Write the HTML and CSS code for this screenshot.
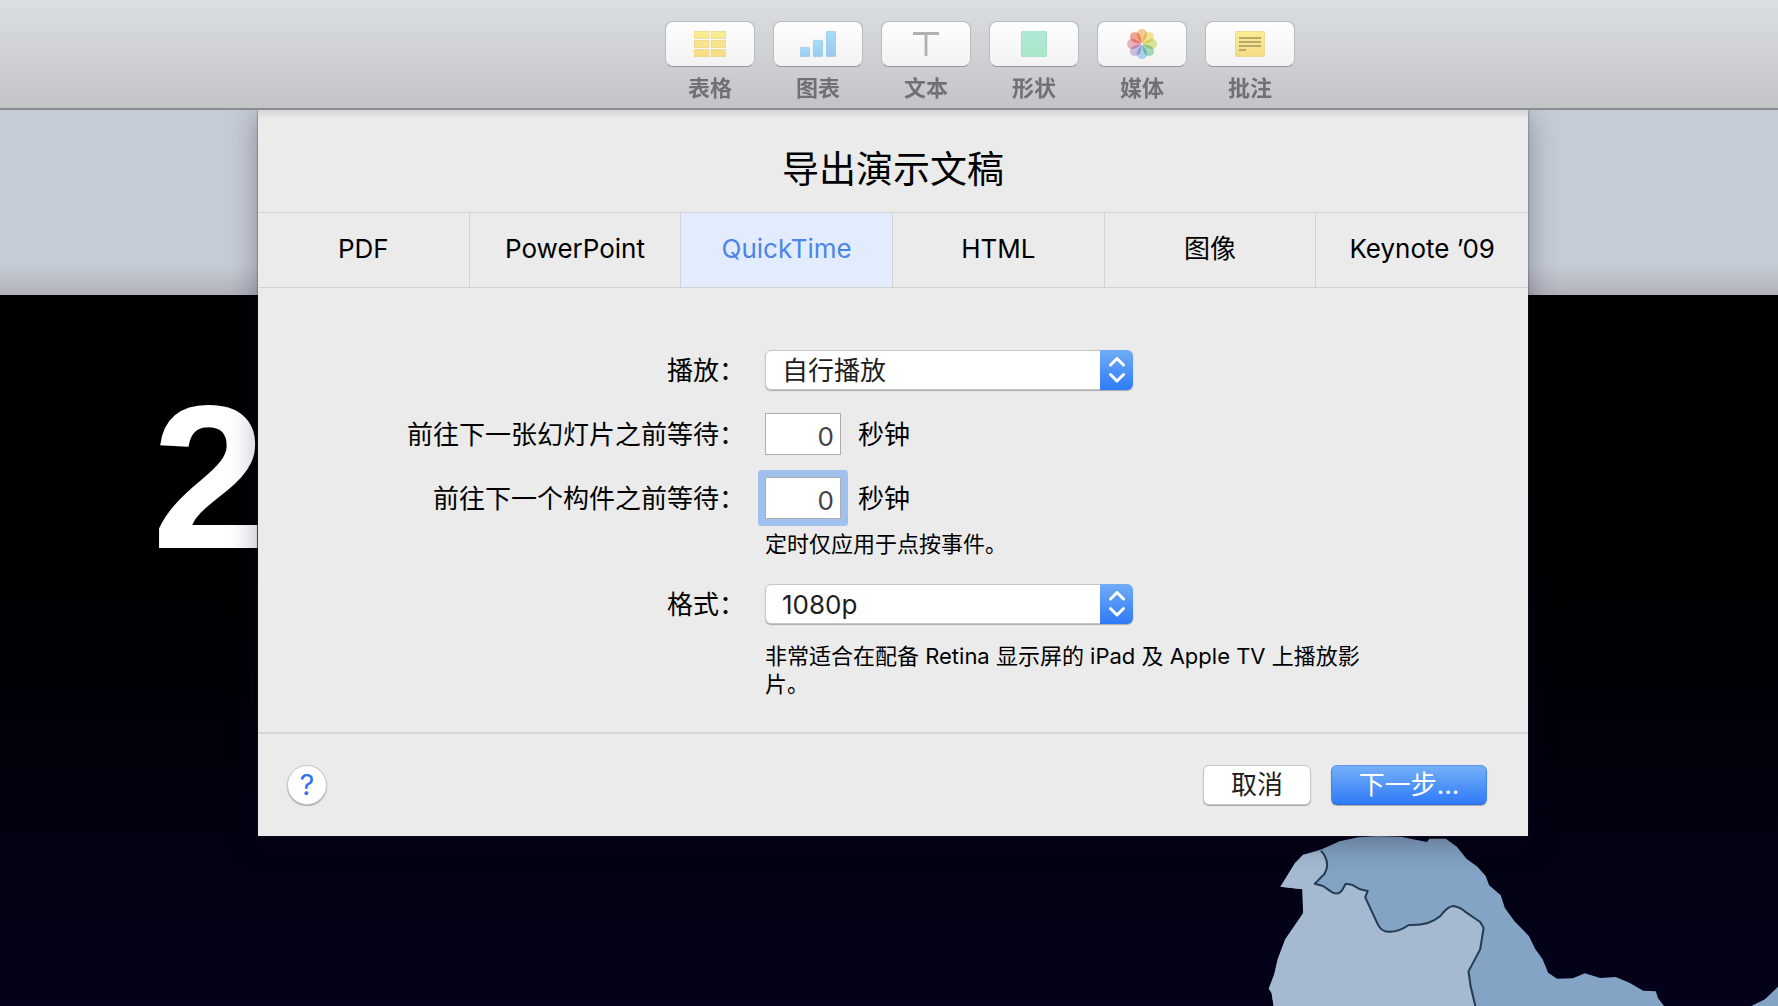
FILE: index.html
```html
<!DOCTYPE html>
<html lang="zh-CN">
<head>
<meta charset="utf-8">
<meta name="viewport" content="width=device-width, initial-scale=1">
<title>导出演示文稿</title>
<link rel="stylesheet" href="styles.css">
</head>
<body>
<header class="toolbar">
  <button class="tool" type="button">
    <span class="tool-face">
      <svg width="32" height="26" viewBox="0 0 32 26" aria-hidden="true">
        <defs><linearGradient id="yellow" x1="0" y1="0" x2="0" y2="26" gradientUnits="userSpaceOnUse"><stop offset="0" stop-color="#f9ee94"/><stop offset="1" stop-color="#f5da84"/></linearGradient></defs>
        <g fill="url(#yellow)" stroke="#ead27c" stroke-width=".6">
          <rect x=".3" y=".3" width="14.6" height="7.2"/><rect x="17.1" y=".3" width="14.6" height="7.2"/>
          <rect x=".3" y="9.3" width="14.6" height="7.2"/><rect x="17.1" y="9.3" width="14.6" height="7.2"/>
          <rect x=".3" y="18.5" width="14.6" height="7.2"/><rect x="17.1" y="18.5" width="14.6" height="7.2"/>
        </g>
      </svg>
    </span>
    <span class="tool-name">表格</span>
  </button>
  <button class="tool" type="button">
    <span class="tool-face">
      <svg width="36" height="26" viewBox="0 0 36 26" aria-hidden="true">
        <defs><linearGradient id="blue" x1="0" y1="0" x2="0" y2="1"><stop offset="0" stop-color="#a5def7"/><stop offset="1" stop-color="#9bc8ee"/></linearGradient></defs>
        <g fill="url(#blue)" stroke="#8fc3e6" stroke-width=".7">
          <rect x=".4" y="16.4" width="9.2" height="9.2" rx=".8"/><rect x="13.4" y="9.4" width="9.2" height="16.2" rx=".8"/><rect x="26.4" y=".4" width="9.2" height="25.2" rx=".8"/>
        </g>
      </svg>
    </span>
    <span class="tool-name">图表</span>
  </button>
  <button class="tool" type="button">
    <span class="tool-face">
      <svg width="26" height="26" viewBox="0 0 26 26" aria-hidden="true"><path d="M.5 4V2.5h25V4M13 2.500V25" fill="none" stroke="#b0b0b1" stroke-width="2.800"/></svg>
    </span>
    <span class="tool-name">文本</span>
  </button>
  <button class="tool" type="button">
    <span class="tool-face">
      <svg width="26" height="26" viewBox="0 0 26 26" aria-hidden="true">
        <defs><linearGradient id="green" x1="0" y1="0" x2="0" y2="1"><stop offset="0" stop-color="#b1e8da"/><stop offset="1" stop-color="#a9e6c5"/></linearGradient></defs>
        <rect x=".4" y=".4" width="25.200" height="25.200" rx=".8" fill="url(#green)" stroke="#98d9bd" stroke-width=".7"/>
      </svg>
    </span>
    <span class="tool-name">形状</span>
  </button>
  <button class="tool" type="button">
    <span class="tool-face">
      <svg width="32" height="32" viewBox="-16 -16 32 32" aria-hidden="true">
        <g class="petals" stroke-opacity=".3" stroke-width=".6">
          <path fill="#f9cd94" stroke="#e7a94f" d="M-4.800-10a4.800 4.800 0 0 1 9.600 0C4.800-6 2-3 0-1-2-3-4.800-6-4.800-10Z"/>
          <path fill="#f7e998" stroke="#dcc95a" transform="rotate(45)" d="M-4.800-10a4.800 4.800 0 0 1 9.600 0C4.800-6 2-3 0-1-2-3-4.800-6-4.800-10Z"/>
          <path fill="#e0eaa0" stroke="#bccb60" transform="rotate(90)" d="M-4.800-10a4.800 4.800 0 0 1 9.600 0C4.800-6 2-3 0-1-2-3-4.800-6-4.800-10Z"/>
          <path fill="#a9e0c0" stroke="#5fb98a" transform="rotate(135)" d="M-4.800-10a4.800 4.800 0 0 1 9.600 0C4.800-6 2-3 0-1-2-3-4.800-6-4.800-10Z"/>
          <path fill="#b3d8f5" stroke="#76aee0" transform="rotate(180)" d="M-4.800-10a4.800 4.800 0 0 1 9.600 0C4.800-6 2-3 0-1-2-3-4.800-6-4.800-10Z"/>
          <path fill="#d2c2ea" stroke="#a88ccb" transform="rotate(225)" d="M-4.800-10a4.800 4.800 0 0 1 9.600 0C4.800-6 2-3 0-1-2-3-4.800-6-4.800-10Z"/>
          <path fill="#f1b6c6" stroke="#d98399" transform="rotate(270)" d="M-4.800-10a4.800 4.800 0 0 1 9.600 0C4.800-6 2-3 0-1-2-3-4.800-6-4.800-10Z"/>
          <path fill="#f6a794" stroke="#df7863" transform="rotate(315)" d="M-4.800-10a4.800 4.800 0 0 1 9.600 0C4.800-6 2-3 0-1-2-3-4.800-6-4.800-10Z"/>
        </g>
      </svg>
    </span>
    <span class="tool-name">媒体</span>
  </button>
  <button class="tool" type="button">
    <span class="tool-face">
      <svg width="30" height="26" viewBox="0 0 30 26" aria-hidden="true">
        <rect x=".4" y=".4" width="29.200" height="25.200" rx=".8" fill="url(#yellow)" stroke="#e6cf80" stroke-width=".7"/>
        <path d="M4 7h22M4 11h22M4 15h22M4 19h7" stroke="#b9a96c" stroke-width="1.800"/>
      </svg>
    </span>
    <span class="tool-name">批注</span>
  </button>
</header>

<main class="workspace">
  <div class="canvas">
    <section class="slide">
      <span class="slide-number">2</span>
      <svg class="map" viewBox="0 0 1568 540" preserveAspectRatio="none" aria-hidden="true">
        <path fill="#83a4c4" d="M98 540 92 500 84 488 100 445 110 400 132 340 184 262 182 190 118 182 160 112 184 86 238 70 290 46 345 34 400 30 470 32 515 42 545 48 552 38 600 38 632 62 660 98 692 122 716 150 726 178 760 208 772 246 800 286 842 330 860 368 882 400 898 440 924 458 970 457 1005 442 1050 456 1095 453 1135 470 1175 494 1212 496 1218 516 1236 540ZM1490 540 1530 520 1568 482V540Z"/>
        <path fill="#a5bad1" d="M98 540 92 500 84 488 100 445 110 400 132 340 184 262 182 190 118 182 160 112 184 86 236 76Q266 110 246 144L218 173 242 180 270 200Q288 208 298 192L308 173 326 176 350 190 372 195 365 214 402 296Q412 316 430 317 460 320 492 297 550 300 584 270 606 240 622 240 640 242 660 260L700 288 710 306 700 370 666 436 672 480 686 540Z"/>
        <path fill="none" stroke="#243d54" stroke-width="6" stroke-linejoin="round" d="M236 74Q266 110 246 144L218 173 242 180 270 200Q288 208 298 192L308 173 326 176 350 190 372 195 365 214 402 296Q412 316 430 317 460 320 492 297 550 300 584 270 606 240 622 240 640 242 660 260L700 288 710 306 700 370 666 436 672 480 686 540"/>
      </svg>
    </section>
  </div>

  <form class="sheet">
    <h1 class="sheet-title">导出演示文稿</h1>
    <nav class="tabs" aria-label="导出格式">
      <button class="tab" type="button">PDF</button>
      <button class="tab" type="button">PowerPoint</button>
      <button class="tab tab-current" type="button" aria-current="true">QuickTime</button>
      <button class="tab" type="button">HTML</button>
      <button class="tab" type="button">图像</button>
      <button class="tab" type="button">Keynote ’09</button>
    </nav>

    <div class="fields">
      <label class="field-label" for="playback">播放：</label>
      <div class="popup">
        <select class="popup-select" id="playback"><option>自行播放</option></select>
        <span class="popup-cap"><svg width="16" height="26" viewBox="0 0 16 26" aria-hidden="true"><path d="M1.500 8 8 1.500 14.500 8M1.500 17.500 8 24l6.500-6.500"/></svg></span>
      </div>

      <label class="field-label" for="slide-wait">前往下一张幻灯片之前等待：</label>
      <div class="seconds"><input class="number" id="slide-wait" type="text" inputmode="numeric" value="0"><span class="unit">秒钟</span></div>

      <label class="field-label" for="build-wait">前往下一个构件之前等待：</label>
      <div class="seconds"><input class="number number-active" id="build-wait" type="text" inputmode="numeric" value="0"><span class="unit">秒钟</span></div>
      <p class="hint hint-timing">定时仅应用于点按事件。</p>

      <label class="field-label" for="format">格式：</label>
      <div class="popup">
        <select class="popup-select" id="format"><option>1080p</option></select>
        <span class="popup-cap"><svg width="16" height="26" viewBox="0 0 16 26" aria-hidden="true"><path d="M1.500 8 8 1.500 14.500 8M1.500 17.500 8 24l6.500-6.500"/></svg></span>
      </div>
      <p class="hint">非常适合在配备 Retina 显示屏的 iPad 及 Apple TV 上播放影片。</p>
    </div>

    <footer class="actions">
      <button class="help" type="button" aria-label="帮助">?</button>
      <button class="button" type="button">取消</button>
      <button class="button button-primary" type="submit">下一步...</button>
    </footer>
  </form>
</main>
</body>
</html>
```
FILE: styles.css
```css
* {
  box-sizing: border-box;
}

body {
  margin: 0;
  min-height: 100vh;
  display: flex;
  flex-direction: column;
  font-family: Inter, "Noto Sans CJK SC", sans-serif;
  font-size: 26px;
  line-height: 40px;
  color: #000;
  background: #020009;
}

button,
input,
select {
  font: inherit;
  color: inherit;
  margin: 0;
}

/* Toolbar */

.toolbar {
  display: flex;
  justify-content: center;
  gap: 18px;
  padding: 21px 0 5px 182px;
  border-bottom: 2px solid #8b8c90;
  background: linear-gradient(#dbdfe2, #c3c4c7);
}

.tool {
  display: flex;
  flex-direction: column;
  gap: 7px;
  width: 90px;
  padding: 0;
  border: 0;
  background: none;
}

.tool-face {
  display: flex;
  align-items: center;
  justify-content: center;
  height: 46px;
  border: 1px solid #b9babd;
  border-bottom-color: #98999c;
  border-radius: 8px;
  background: linear-gradient(#fefefe, #f2f2f2);
}

.petals path {
  mix-blend-mode: multiply;
}

.tool-name {
  font-size: 22px;
  font-weight: 600;
  line-height: 29px;
  color: #707175;
}

/* Workspace: the sheet is stacked over the canvas */

.workspace {
  flex: 1;
  display: grid;
  grid-template-columns: 100%;
  overflow: hidden;
}

.canvas,
.sheet {
  grid-area: 1 / 1;
}

.canvas {
  display: flex;
  flex-direction: column;
  padding-top: 185px;
  background: linear-gradient(#c6ccd5 155px, #b0b2bb 185px);
}

.slide {
  position: relative;
  flex: 1;
  padding: 92px 0 0 152px;
  background: linear-gradient(#000, #000002 40%, #04021a);
}

.slide-number {
  font-family: "Liberation Sans", sans-serif;
  font-size: 204px;
  font-weight: 700;
  line-height: 180px;
  color: #fff;
}

.map {
  position: absolute;
  right: 0;
  bottom: 0;
  width: 538px;
  height: 180px;
}

/* Sheet */

.sheet {
  z-index: 1;
  align-self: start;
  margin: 0 250px 0 258px;
  background: linear-gradient(#d4d4d5, #ebebeb 8px);
  box-shadow: 0 0 2px rgba(40, 40, 50, 0.7), 0 6px 28px rgba(20, 10, 40, 0.35);
}

.sheet-title {
  margin: 0;
  padding: 36px 0 18px;
  font-size: 37px;
  font-weight: 400;
  line-height: 48px;
  text-align: center;
}

.tabs {
  display: grid;
  grid-template-columns: repeat(6, 1fr);
  border-top: 1px solid #d2d2d4;
  border-bottom: 1px solid #d2d2d4;
}

.tab {
  height: 74px;
  padding: 0 0 2px;
  border: 0;
  border-right: 1px solid #d2d2d4;
  background: none;
}

.tab:last-child {
  border-right: 0;
}

.tab-current {
  color: #4a86e8;
  background: #e2ecfe;
}

.fields {
  display: grid;
  grid-template-columns: 487px minmax(0, 620px);
  column-gap: 20px;
  align-items: center;
  padding: 62px 0 34px;
}

.field-label {
  padding-top: 2px;
  line-height: 38px;
  text-align: right;
}

.popup {
  position: relative;
  display: flex;
  width: 368px;
  height: 40px;
  border: 1px solid #c6c6c6;
  border-radius: 6px;
  background: #fff;
  box-shadow: 0 1px 1px #aaa;
}

.popup-select {
  flex: 1;
  padding: 0 16px;
  border: 0;
  appearance: none;
  background: none;
  color: #1e1e1e;
  outline: none;
}

.popup-cap {
  position: absolute;
  top: -1px;
  right: -1px;
  display: flex;
  align-items: center;
  justify-content: center;
  width: 33px;
  height: 40px;
  border-radius: 0 6px 6px 0;
  background: linear-gradient(#70adf5, #2f7af8);
  pointer-events: none;
}

.popup-cap path {
  fill: none;
  stroke: #fff;
  stroke-width: 3;
  stroke-linecap: round;
  stroke-linejoin: round;
}

.seconds {
  display: flex;
  align-items: center;
  gap: 17px;
  height: 42px;
}

.seconds,
.field-label[for$="wait"] {
  margin-top: 22px;
}

.popup + .field-label,
.popup + .field-label + .seconds {
  margin-top: 23px;
}

.unit {
  padding-top: 2px;
  line-height: 38px;
}

.number {
  width: 76px;
  height: 42px;
  padding: 4px 6px 0;
  border: 1px solid #adadad;
  border-radius: 0;
  background: #fff;
  color: #444;
  text-align: right;
  outline: none;
}

.number-active {
  border-radius: 1px;
  box-shadow: 0 0 0 7px #a0c0ee;
}

.hint {
  grid-column: 2;
  margin: 18px 0 0;
  font-size: 22px;
  line-height: 28px;
}

.hint-timing {
  margin: 11px 0 26px;
}

.actions {
  display: flex;
  align-items: center;
  gap: 20px;
  padding: 31px 41px 31px 29px;
  border-top: 2px solid #d6d6d6;
}

.help {
  width: 40px;
  height: 40px;
  margin-right: auto;
  padding: 0;
  border: 1px solid #c6c6c6;
  border-radius: 50%;
  background: #fff;
  box-shadow: 0 1px 1px #aaa;
  color: #2f74ee;
  font-size: 29px;
  line-height: 38px;
}

.button {
  min-width: 108px;
  height: 40px;
  padding: 0 24px;
  border: 1px solid #c6c6c6;
  border-radius: 6px;
  background: #fff;
  box-shadow: 0 1px 1px #aaa;
  color: #1e1e1e;
  line-height: 36px;
}

.button-primary {
  min-width: 156px;
  border-color: #5a97ee #4186f0 #2a6be0;
  background: linear-gradient(#75b0f7, #2f7af8);
  color: #fff;
}
```
